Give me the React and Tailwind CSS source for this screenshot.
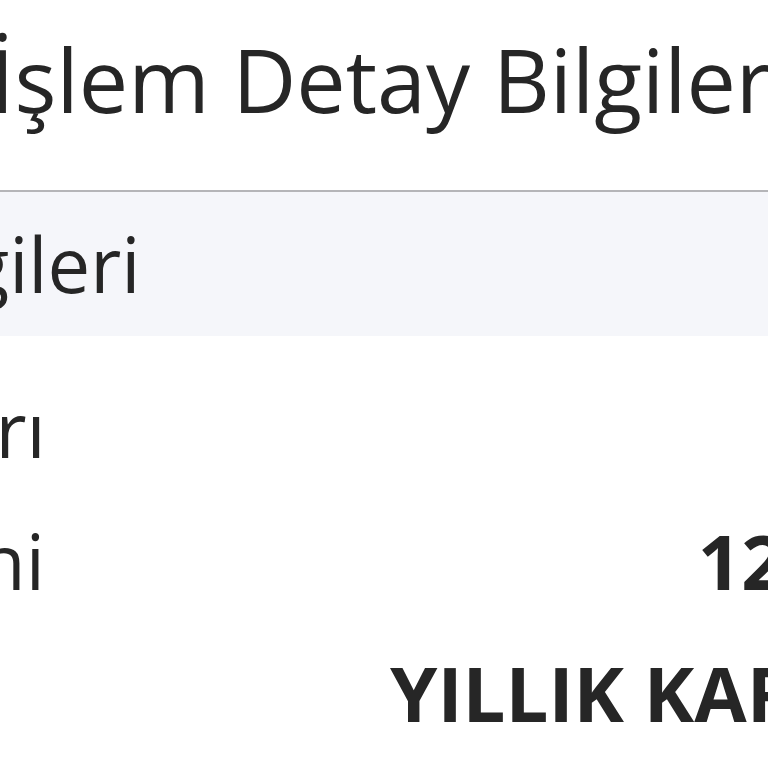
export default function App() {
  const rows = [
    { label: "Kart Tutarı", value: "85,00 TL", align: "text-right" },
    { label: "Ay Dilimini", value: "12.500,00 TL", align: "text-right" },
    { label: "", value: "YILLIK KART ÜCRETİ", align: "text-left" },
  ];

  return (
    <div
      className="w-[768px] h-[768px] overflow-hidden bg-white text-[#262626]"
      style={{ fontFamily: '"Open Sans", "Noto Sans", sans-serif' }}
    >
      {/* page title */}
      <div className="-ml-[10px] pt-[29px] pb-[61px] whitespace-nowrap text-[88px] leading-[100px]">
        İşlem Detay Bilgileri
      </div>

      <div className="border-t-2 border-[#b5b5b8]" />

      {/* section header */}
      <div className="bg-[#f5f6fa] h-[144px] -ml-[329px] w-[1600px] whitespace-nowrap text-[76px] leading-[144px]">
        İşlem Bilgileri
      </div>

      {/* detail rows */}
      <div className="-ml-[329px] w-[1600px] pt-[27px]">
        {rows.map((r, i) => (
          <div key={i} className="flex h-[132px] text-[76px] leading-[132px] whitespace-nowrap">
            <div className="w-[719px] shrink-0">{r.label}</div>
            <div className={`w-[762px] shrink-0 font-bold ${r.align}`}>{r.value}</div>
          </div>
        ))}
      </div>
    </div>
  );
}
